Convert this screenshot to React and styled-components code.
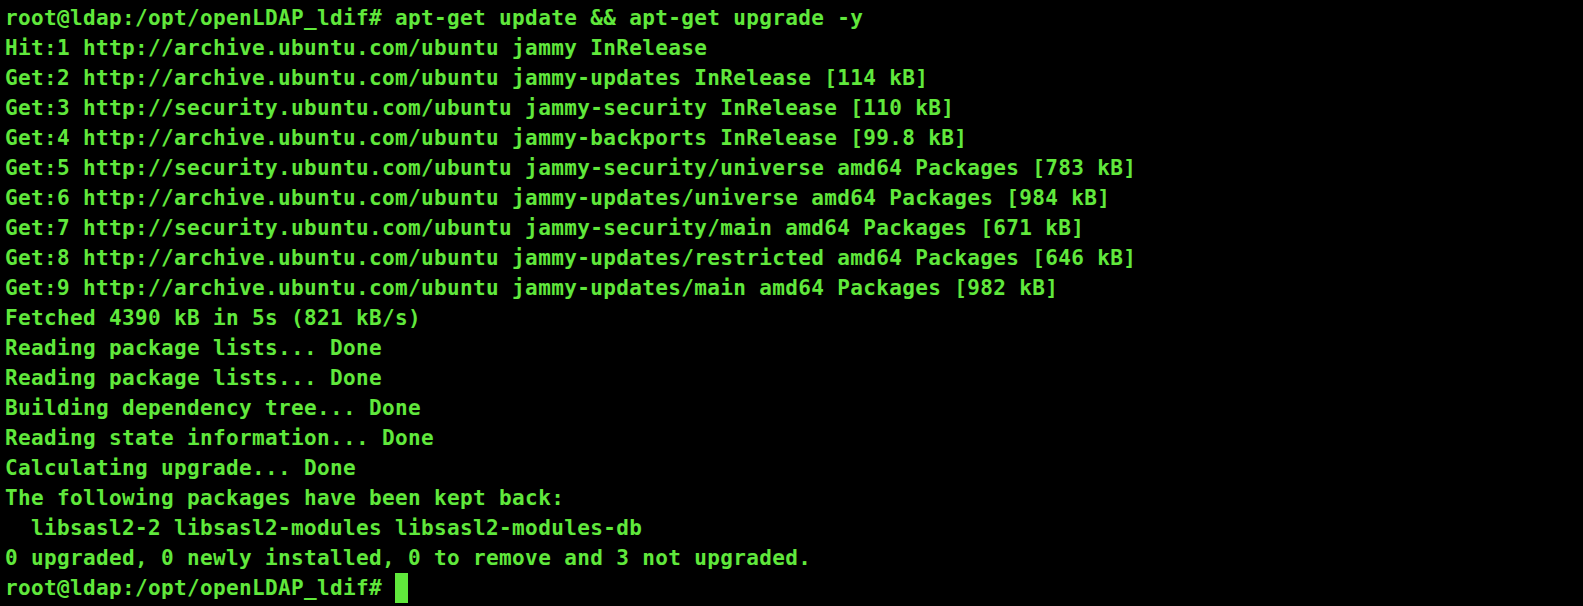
import React from 'react';
import styled, { createGlobalStyle } from 'styled-components';

const GlobalStyle = createGlobalStyle`
  html, body {
    margin: 0;
    background: #000;
  }
`;

const Terminal = styled.div`
  background: #000;
  min-height: 606px;
  box-sizing: border-box;
  padding: 3px 5px;
  font-family: "DejaVu Sans Mono", "Liberation Mono", monospace;
  font-weight: bold;
  font-size: 21px;
  letter-spacing: 0.36px;
  line-height: 30px;
  color: #60e83c;
`;

const Line = styled.div`
  white-space: pre;
  height: 30px;
`;

const Cursor = styled.span`
  display: inline-block;
  width: 13px;
  height: 30px;
  background: #60e83c;
  vertical-align: top;
`;

const lines = [
  'root@ldap:/opt/openLDAP_ldif# apt-get update && apt-get upgrade -y',
  'Hit:1 http://archive.ubuntu.com/ubuntu jammy InRelease',
  'Get:2 http://archive.ubuntu.com/ubuntu jammy-updates InRelease [114 kB]',
  'Get:3 http://security.ubuntu.com/ubuntu jammy-security InRelease [110 kB]',
  'Get:4 http://archive.ubuntu.com/ubuntu jammy-backports InRelease [99.8 kB]',
  'Get:5 http://security.ubuntu.com/ubuntu jammy-security/universe amd64 Packages [783 kB]',
  'Get:6 http://archive.ubuntu.com/ubuntu jammy-updates/universe amd64 Packages [984 kB]',
  'Get:7 http://security.ubuntu.com/ubuntu jammy-security/main amd64 Packages [671 kB]',
  'Get:8 http://archive.ubuntu.com/ubuntu jammy-updates/restricted amd64 Packages [646 kB]',
  'Get:9 http://archive.ubuntu.com/ubuntu jammy-updates/main amd64 Packages [982 kB]',
  'Fetched 4390 kB in 5s (821 kB/s)',
  'Reading package lists... Done',
  'Reading package lists... Done',
  'Building dependency tree... Done',
  'Reading state information... Done',
  'Calculating upgrade... Done',
  'The following packages have been kept back:',
  '  libsasl2-2 libsasl2-modules libsasl2-modules-db',
  '0 upgraded, 0 newly installed, 0 to remove and 3 not upgraded.',
];

const App = () => {
  return (
    <>
      <GlobalStyle />
      <Terminal>
        {lines.map((text, i) => (
          <Line key={i}>{text}</Line>
        ))}
        <Line>
          {'root@ldap:/opt/openLDAP_ldif# '}
          <Cursor />
        </Line>
      </Terminal>
    </>
  );
};

export default App;
